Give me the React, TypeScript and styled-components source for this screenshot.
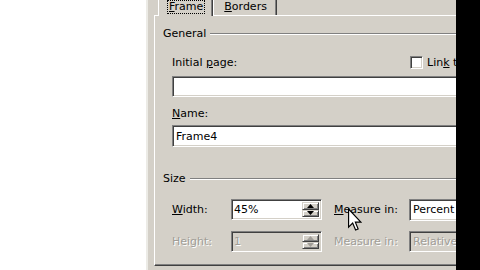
import React from 'react';
import styled, { createGlobalStyle, css } from 'styled-components';

const FACE = '#d4d0c8';
const SHADOW = '#808080';
const DARK = '#404040';

const GlobalStyle = createGlobalStyle`
  html, body {
    margin: 0;
    padding: 0;
    background: #fff;
  }
  body {
    width: 480px;
    height: 270px;
    overflow: hidden;
    font-family: "DejaVu Sans", "Liberation Sans", sans-serif;
    font-size: 11px;
    color: #000;
  }
`;

const Screen = styled.div`
  position: relative;
  display: flex;
  width: 480px;
  height: 270px;
  overflow: hidden;
`;

const Backdrop = styled.div`
  flex: none;
  width: 146px;
  background: #fff;
`;

const Dialog = styled.div`
  flex: 1;
  min-width: 0;
  overflow: hidden;
  display: flex;
  flex-direction: column;
  background: ${FACE};
  border-left: 2px solid #ecebe6;
  padding: 0 0 4px 6px;
`;

const Edge = styled.div`
  flex: none;
  width: 24px;
  background: #000;
`;

const TabRow = styled.div`
  position: relative;
  z-index: 1;
  display: flex;
  height: 15px;
  margin-left: 4px;
`;

const Tab = styled.div<{ $active?: boolean }>`
  display: flex;
  align-items: center;
  box-sizing: border-box;
  height: 100%;
  padding: 0 8px 2px 9px;
  background: ${FACE};
  border-left: 1px solid #fff;
  border-right: 1px solid ${DARK};
  box-shadow: inset -1px 0 ${SHADOW};
  ${(p) =>
    p.$active &&
    css`
      height: calc(100% + 1px);
      padding-bottom: 3px;
    `}
`;

const TabText = styled.span<{ $focus?: boolean }>`
  padding: 0 1px;
  line-height: 12px;
  outline: ${(p) => (p.$focus ? `1px dotted #000` : 'none')};
`;

const Panel = styled.div`
  flex: 1;
  width: 380px;
  box-sizing: border-box;
  border-top: 1px solid #fff;
  border-left: 1px solid #fff;
  border-bottom: 1px solid ${DARK};
  box-shadow: inset 0 -1px ${SHADOW};
  padding: 11px 0 0 8px;
  display: flex;
  flex-direction: column;
`;

const GroupHead = styled.div<{ $gap?: number }>`
  display: flex;
  align-items: center;
  gap: 4px;
  height: 13px;
  line-height: 13px;
  margin-top: ${(p) => p.$gap ?? 0}px;
`;

const GroupLine = styled.div`
  flex: 1;
  height: 0;
  border-top: 1px solid ${SHADOW};
  border-bottom: 1px solid #fff;
`;

const GroupBody = styled.div`
  display: flex;
  flex-direction: column;
  padding-left: 9px;
`;

const LabelRow = styled.div<{ $gap: number }>`
  display: flex;
  align-items: center;
  height: 13px;
  margin-top: ${(p) => p.$gap}px;
`;

const Label = styled.span<{ $width?: number; $disabled?: boolean }>`
  flex: none;
  width: ${(p) => (p.$width ? `${p.$width}px` : 'auto')};
  line-height: 13px;
  white-space: nowrap;
  ${(p) =>
    p.$disabled &&
    css`
      color: #a09d97;
      text-shadow: 1px 1px #fff;
    `}
`;

const Check = styled.label`
  display: flex;
  align-items: center;
  gap: 4px;
  white-space: nowrap;
`;

const sunken = css`
  box-sizing: border-box;
  border-top: 1px solid ${SHADOW};
  border-left: 1px solid ${SHADOW};
  border-bottom: 1px solid #fff;
  border-right: 1px solid #fff;
  box-shadow: inset 1px 1px ${DARK}, inset -1px -1px ${FACE};
`;

const CheckBox = styled.span`
  ${sunken};
  flex: none;
  width: 13px;
  height: 13px;
  background: #fff;
`;

const TextField = styled.div<{ $gap: number; $height: number }>`
  ${sunken};
  display: flex;
  align-items: center;
  width: 320px;
  height: ${(p) => p.$height}px;
  margin-top: ${(p) => p.$gap}px;
  padding-left: 3px;
  background: #fff;
`;

const SizeGrid = styled.div`
  display: grid;
  grid-template-columns: 59px 91px 87px 120px;
  grid-auto-rows: 21px;
  row-gap: 11px;
  align-items: center;
  margin-top: 14px;
`;

const SpinBox = styled.div<{ $disabled?: boolean }>`
  ${sunken};
  display: flex;
  height: 21px;
  background: ${(p) => (p.$disabled ? FACE : '#fff')};
`;

const SpinValue = styled.span<{ $disabled?: boolean }>`
  flex: 1;
  align-self: center;
  padding-left: 2px;
  ${(p) =>
    p.$disabled &&
    css`
      color: #a09d97;
      text-shadow: 1px 1px #fff;
    `}
`;

const SpinButtons = styled.div`
  display: flex;
  flex-direction: column;
  width: 17px;
  padding: 2px 2px 2px 0;
`;

const SpinButton = styled.div<{ $disabled?: boolean }>`
  flex: 1;
  display: flex;
  align-items: center;
  justify-content: center;
  box-sizing: border-box;
  background: ${FACE};
  border-top: 1px solid ${FACE};
  border-left: 1px solid ${FACE};
  border-bottom: 1px solid ${DARK};
  border-right: 1px solid ${DARK};
  box-shadow: inset 1px 1px #fff, inset -1px -1px ${SHADOW};
  color: ${(p) => (p.$disabled ? '#a09d97' : '#000')};
`;

const MeasureLabel = styled(Label)`
  padding-left: 12px;
`;

const Select = styled.div<{ $disabled?: boolean }>`
  ${sunken};
  display: flex;
  align-items: center;
  height: ${(p) => (p.$disabled ? 21 : 22)}px;
  padding-left: 3px;
  background: ${(p) => (p.$disabled ? FACE : '#fff')};
  ${(p) =>
    p.$disabled &&
    css`
      color: #a09d97;
      text-shadow: 1px 1px #fff;
    `}
`;

const Cursor = styled.svg`
  position: absolute;
  left: 348px;
  top: 208px;
  width: 14px;
  height: 23px;
`;

function Arrow({ up }: { up?: boolean }) {
  return (
    <svg width="7" height="4" viewBox="0 0 7 4">
      <path d={up ? 'M3.5 0 L7 4 L0 4 Z' : 'M0 0 L7 0 L3.5 4 Z'} fill="currentColor" />
    </svg>
  );
}

function Spin({ value, disabled }: { value: string; disabled?: boolean }) {
  return (
    <SpinBox $disabled={disabled}>
      <SpinValue $disabled={disabled}>{value}</SpinValue>
      <SpinButtons>
        <SpinButton $disabled={disabled}>
          <Arrow up />
        </SpinButton>
        <SpinButton $disabled={disabled}>
          <Arrow />
        </SpinButton>
      </SpinButtons>
    </SpinBox>
  );
}

export default function App() {
  return (
    <>
      <GlobalStyle />
      <Screen>
        <Backdrop />
        <Dialog>
          <TabRow>
            <Tab $active>
              <TabText $focus>
                <u>F</u>rame
              </TabText>
            </Tab>
            <Tab>
              <TabText>
                <u>B</u>orders
              </TabText>
            </Tab>
          </TabRow>
          <Panel>
            <GroupHead>
              <span>General</span>
              <GroupLine />
            </GroupHead>
            <GroupBody>
              <LabelRow $gap={16}>
                <Label $width={238}>
                  Initial <u>p</u>age:
                </Label>
                <Check>
                  <CheckBox />
                  <span>
                    Lin<u>k</u> to file
                  </span>
                </Check>
              </LabelRow>
              <TextField $gap={7} $height={21} />
              <LabelRow $gap={10}>
                <Label>
                  <u>N</u>ame:
                </Label>
              </LabelRow>
              <TextField $gap={5} $height={22}>
                Frame4
              </TextField>
            </GroupBody>
            <GroupHead $gap={25}>
              <span>Size</span>
              <GroupLine />
            </GroupHead>
            <GroupBody>
              <SizeGrid>
                <Label>
                  <u>W</u>idth:
                </Label>
                <Spin value="45%" />
                <MeasureLabel>
                  <u>M</u>easure in:
                </MeasureLabel>
                <Select>Percent</Select>
                <Label $disabled>Height:</Label>
                <Spin value="1" disabled />
                <MeasureLabel $disabled>Measure in:</MeasureLabel>
                <Select $disabled>Relative</Select>
              </SizeGrid>
            </GroupBody>
          </Panel>
        </Dialog>
        <Edge />
        <Cursor viewBox="0 0 12 19">
          <path
            d="M0.5 0.5 L0.5 16 L4 12.5 L6.5 18.5 L8.7 17.6 L6.3 11.8 L11 11.8 Z"
            fill="#fff"
            stroke="#000"
            strokeWidth="1"
            strokeLinejoin="miter"
          />
        </Cursor>
      </Screen>
    </>
  );
}
